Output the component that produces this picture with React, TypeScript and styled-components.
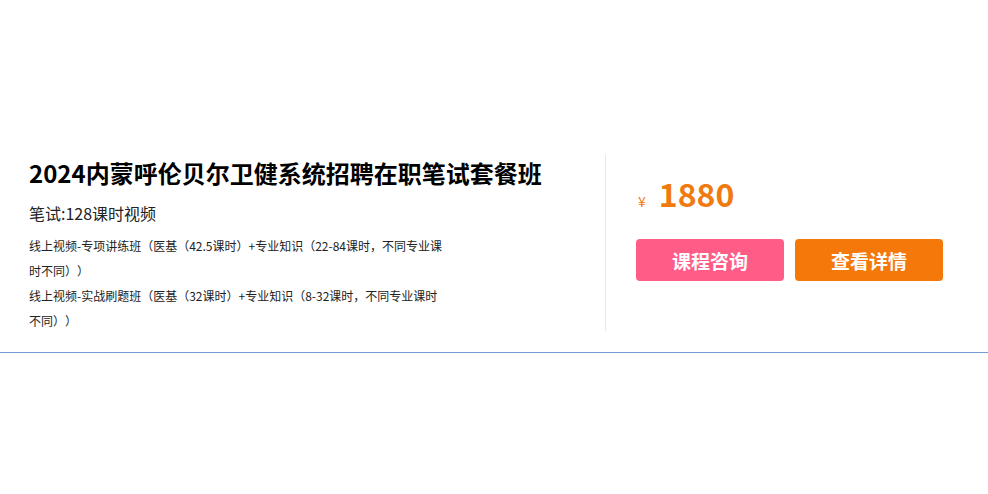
import React from 'react';
import styled, { createGlobalStyle } from 'styled-components';

const GlobalStyle = createGlobalStyle`
  body {
    margin: 0;
    background: #fff;
    font-family: "Noto Sans CJK SC", "Noto Sans", sans-serif;
    color: #333;
    text-spacing-trim: space-all;
  }
`;

interface CourseProps {
  title: string;
  subtitle: string;
  lines: string[];
  price: string;
}

const Course = (props: CourseProps): JSX.Element => {
  const { title, subtitle, lines, price } = props;
  return (
    <Card>
      <Info>
        <Title>{title}</Title>
        <SubTitle>{subtitle}</SubTitle>
        <Desc>
          {lines.map((line, index) => (
            <div key={index}>{line}</div>
          ))}
        </Desc>
      </Info>
      <Side>
        <Price>
          <Yen>¥</Yen>
          <Amount>{price}</Amount>
        </Price>
        <Buttons>
          <Button tone="#ff5c88">课程咨询</Button>
          <Button tone="#f5790a">查看详情</Button>
        </Buttons>
      </Side>
    </Card>
  );
};

const App = (): JSX.Element => (
  <>
    <GlobalStyle />
    <Course
      title="2024内蒙呼伦贝尔卫健系统招聘在职笔试套餐班"
      subtitle="笔试:128课时视频"
      lines={[
        '线上视频-专项讲练班（医基（42.5课时）+专业知识（22-84课时，不同专业课时不同））',
        '线上视频-实战刷题班（医基（32课时）+专业知识（8-32课时，不同专业课时不同））',
      ]}
      price="1880"
    />
  </>
);

interface ButtonStyleProps {
  tone: string;
}

const Card = styled.div`
  display: flex;
  margin-top: 135px;
  padding: 20px 0 21px 29px;
  border-bottom: 1px solid #769cd6;
`;

const Info = styled.div`
  width: 577px;
  height: 176px;
  box-sizing: border-box;
  border-right: 1px solid #e6e6e6;
`;

const Title = styled.h2`
  margin: 2px 0 0;
  font-size: 24px;
  line-height: 32px;
  font-weight: 700;
  color: #000;
`;

const SubTitle = styled.div`
  margin-top: 12px;
  font-size: 16px;
  line-height: 24px;
  color: #222;
`;

const Desc = styled.div`
  margin-top: 8px;
  width: 416px;
  font-size: 12px;
  line-height: 25px;
  color: #222;
`;

const Side = styled.div`
  padding-left: 30px;
`;

const Price = styled.div`
  display: flex;
  align-items: baseline;
  margin-top: 18px;
  height: 40px;
  color: #f07a10;
`;

const Yen = styled.span`
  font-size: 14px;
  margin: 0 13px 0 2px;
`;

const Amount = styled.span`
  font-size: 32px;
  line-height: 40px;
  font-weight: 700;
`;

const Buttons = styled.div`
  display: flex;
  gap: 11px;
  margin-top: 26px;
`;

const Button = styled.button<ButtonStyleProps>`
  width: 148px;
  height: 42px;
  border: none;
  border-radius: 4px;
  background-color: ${(props) => props.tone};
  color: #fff;
  font-family: inherit;
  font-size: 19px;
  font-weight: 700;
  cursor: pointer;
`;

export default App;
